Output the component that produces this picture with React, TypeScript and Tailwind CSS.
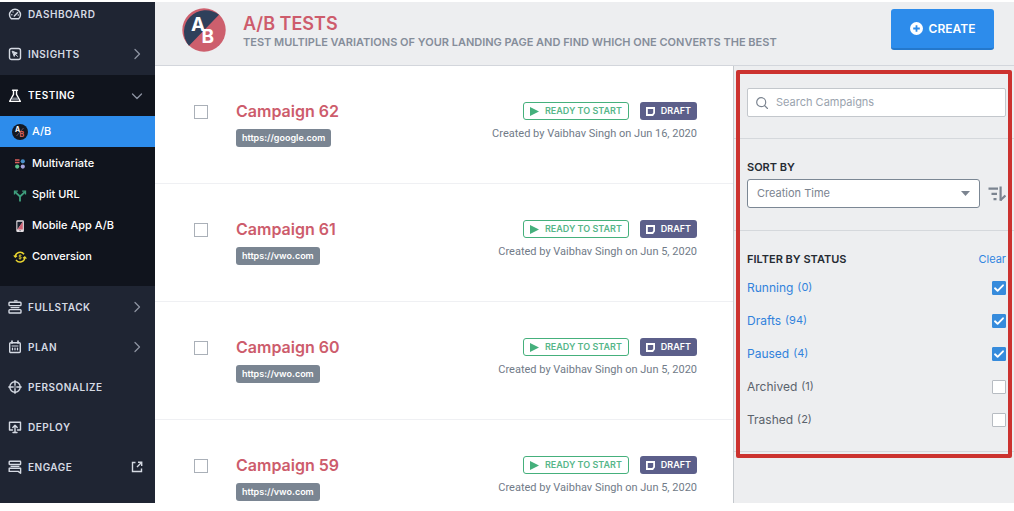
import React, { useState, type ReactNode } from 'react';

type NavigationItem = {
  label: string;
  icon: ReactNode;
  trailing?: 'chevron' | 'external';
};

type Campaign = {
  id: number;
  url: string;
  created: string;
};

const stroke = {
  fill: 'none',
  stroke: 'currentColor',
  strokeWidth: 1.6,
  strokeLinecap: 'round',
  strokeLinejoin: 'round',
} as const;

const topNavigation: NavigationItem[] = [
  { label: 'INSIGHTS', icon: <InsightsIcon />, trailing: 'chevron' },
];

const testingNavigation = [
  { label: 'Multivariate', icon: <MultivariateIcon /> },
  { label: 'Split URL', icon: <SplitIcon /> },
  { label: 'Mobile App A/B', icon: <MobileIcon /> },
  { label: 'Conversion', icon: <ConversionIcon /> },
];

const bottomNavigation: NavigationItem[] = [
  { label: 'FULLSTACK', icon: <FullstackIcon />, trailing: 'chevron' },
  { label: 'PLAN', icon: <PlanIcon />, trailing: 'chevron' },
  { label: 'PERSONALIZE', icon: <PersonalizeIcon /> },
  { label: 'DEPLOY', icon: <DeployIcon /> },
  { label: 'ENGAGE', icon: <EngageIcon />, trailing: 'external' },
];

const campaigns: Campaign[] = [
  { id: 62, url: 'https://google.com', created: 'Jun 16, 2020' },
  { id: 61, url: 'https://vwo.com', created: 'Jun 5, 2020' },
  { id: 60, url: 'https://vwo.com', created: 'Jun 5, 2020' },
  { id: 59, url: 'https://vwo.com', created: 'Jun 5, 2020' },
];

const statuses = [
  { name: 'Running', count: 0 },
  { name: 'Drafts', count: 94 },
  { name: 'Paused', count: 4 },
  { name: 'Archived', count: 1 },
  { name: 'Trashed', count: 2 },
];

export default function App() {
  return (
    <div className="flex h-screen overflow-hidden bg-white pt-0.5 pb-2 font-['Inter',sans-serif]">
      <Sidebar />
      <div className="flex min-w-0 flex-1 flex-col">
        <Header />
        <div className="flex min-h-0 flex-1">
          <main className="min-w-0 flex-1 overflow-hidden">
            {campaigns.map((campaign) => (
              <CampaignRow key={campaign.id} campaign={campaign} />
            ))}
          </main>
          <FilterPanel />
        </div>
      </div>
    </div>
  );
}

function Sidebar() {
  return (
    <nav
      aria-label="Main"
      className="w-[155px] shrink-0 overflow-hidden bg-[#1f2533] text-[#d5dae3]"
    >
      <a href="#dashboard" className="flex h-8 items-center gap-1.5 pb-2 pl-2">
        <DashboardIcon />
        <span className="text-[10px] font-semibold tracking-wider">DASHBOARD</span>
      </a>
      {topNavigation.map((item) => (
        <NavItem key={item.label} item={item} />
      ))}
      <div className="my-px bg-[#10141d] pb-3.5 text-white">
        <a href="#testing" className="flex h-[41px] items-center gap-1.5 pr-3 pl-2">
          <FlaskIcon />
          <span className="text-[10px] font-semibold tracking-wider">TESTING</span>
          <svg className="ml-auto h-3 w-3 text-[#8c93a1]" viewBox="0 0 12 12" {...stroke} strokeWidth={1.3}>
            <path d="M1.5 4 6 8.5 10.5 4" />
          </svg>
        </a>
        <a
          href="#ab"
          aria-current="page"
          className="mb-px flex h-[31px] items-center gap-1 bg-[#2d8ceb] pl-3 text-[11px] font-medium"
        >
          <AbSmallIcon />
          A/B
        </a>
        {testingNavigation.map((item) => (
          <a
            key={item.label}
            href="#tests"
            className="flex h-[31px] items-center gap-1 pl-3 text-[11px] font-medium"
          >
            {item.icon}
            {item.label}
          </a>
        ))}
      </div>
      {bottomNavigation.map((item) => (
        <NavItem key={item.label} item={item} />
      ))}
    </nav>
  );
}

function NavItem({ item }: { item: NavigationItem }) {
  return (
    <a href="#nav" className="flex h-10 items-center gap-1.5 pr-3 pl-2">
      {item.icon}
      <span className="text-[10px] font-semibold tracking-wider">{item.label}</span>
      {item.trailing === 'chevron' ? (
        <svg className="ml-auto h-3 w-3 text-[#8c93a1]" viewBox="0 0 12 12" {...stroke} strokeWidth={1.3}>
          <path d="M4 1.5 8.5 6 4 10.5" />
        </svg>
      ) : null}
      {item.trailing === 'external' ? (
        <svg className="ml-auto h-3 w-3" viewBox="0 0 12 12" {...stroke} strokeWidth={1.4} strokeLinecap="butt" strokeLinejoin="miter">
          <path d="M4.5 1.5h-3v9h9V7.5M7 1.3h3.7V5M10.5 1.5 6 6" />
        </svg>
      ) : null}
    </a>
  );
}

function Header() {
  return (
    <header className="flex h-16 shrink-0 items-center border-b border-[#d3d6dc] bg-[#edeef0] pr-5 pl-[27px]">
      <div className="flex flex-1 items-center gap-[17px] pb-2">
        <AbLogo />
        <div className="pt-1">
          <h1 className="text-lg leading-5 font-semibold text-[#cd5c6c]">A/B TESTS</h1>
          <p className="text-[11px] leading-4 font-semibold whitespace-nowrap text-[#858d9a]">
            TEST MULTIPLE VARIATIONS OF YOUR LANDING PAGE AND FIND WHICH ONE CONVERTS THE BEST
          </p>
        </div>
      </div>
      <button
        type="button"
        className="mb-2 flex h-[41px] w-[103px] items-center justify-center gap-1.5 rounded-[3px] border-b-2 border-[#2478cc] bg-[#2d8ceb] text-xs font-semibold text-white"
      >
        <svg className="h-[13px] w-[13px]" viewBox="0 0 13 13">
          <circle cx="6.5" cy="6.5" r="6.5" fill="#fff" />
          <path d="M6.5 3.2v6.6M3.2 6.5h6.6" stroke="#2d8ceb" strokeWidth="1.8" />
        </svg>
        CREATE
      </button>
    </header>
  );
}

function CampaignRow({ campaign }: { campaign: Campaign }) {
  return (
    <article className="flex h-[118px] items-start border-b border-[#eff0f3] pt-9 pr-9 pl-[39px]">
      <input
        type="checkbox"
        aria-label={`Select Campaign ${campaign.id}`}
        className="mt-[3px] h-3.5 w-3.5 shrink-0 appearance-none border border-[#aab0b8] bg-white checked:bg-[#2d8ceb]"
      />
      <div className="ml-7 flex flex-col items-start gap-2">
        <h2 className="text-base leading-[19px] font-semibold text-[#cd5c6c]">Campaign {campaign.id}</h2>
        <a
          href={campaign.url}
          className="flex h-[18px] items-center rounded-[3px] bg-[#7a8592] px-1.5 text-[9px] font-semibold text-white"
        >
          {campaign.url}
        </a>
      </div>
      <div className="ml-auto flex flex-col items-end gap-1.5">
        <div className="flex gap-[11px]">
          <span className="flex h-[18px] items-center gap-1.5 rounded-[3px] border border-[#45b07c] px-1.5 text-[9px] font-semibold text-[#56b689]">
            <svg className="h-[9px] w-[9px]" viewBox="0 0 9 9" fill="#45b07c">
              <path d="M0 0 9 4.5 0 9z" />
            </svg>
            READY TO START
          </span>
          <span className="flex h-[18px] items-center gap-1.5 rounded-[3px] bg-[#5c5f8a] px-1.5 text-[9px] font-semibold text-white">
            <svg className="h-[9px] w-[9px]" viewBox="0 0 9 9" fill="none" stroke="#fff" strokeWidth="1.8">
              <path d="M.9 1h7.2v5L6.6 8H.9z" />
            </svg>
            DRAFT
          </span>
        </div>
        <p className="font-['Roboto',sans-serif] text-[11px] leading-4 text-[#717b88]">
          Created by Vaibhav Singh on {campaign.created}
        </p>
      </div>
    </article>
  );
}

function FilterPanel() {
  const [selected, setSelected] = useState(['Running', 'Drafts', 'Paused']);

  const toggle = (name: string) =>
    setSelected((current) =>
      current.includes(name) ? current.filter((item) => item !== name) : [...current, name],
    );

  return (
    <aside className="relative w-[281px] shrink-0 border-l border-[#c5c9ce] bg-[#edeef0]">
      <div className="border-b border-[#d5d8dc] pt-[22px] pr-2 pb-[21px] pl-[13px]">
        <label className="flex h-[29px] items-center gap-2 rounded-[2px] border border-[#c3c7cc] bg-white px-2">
          <svg className="h-3 w-3 shrink-0 text-[#7b8490]" viewBox="0 0 12 12" {...stroke} strokeWidth={1.2}>
            <circle cx="5.2" cy="5.2" r="4.5" />
            <path d="m8.5 8.5 3 3" />
          </svg>
          <input
            type="search"
            aria-label="Search Campaigns"
            placeholder="Search Campaigns"
            className="min-w-0 flex-1 text-[11px] text-[#4c545e] outline-none placeholder:text-[#9aa3ae]"
          />
        </label>
      </div>

      <div className="border-b border-[#d5d8dc] pt-5 pr-2 pb-[22px] pl-[13px]">
        <label htmlFor="sort" className="block pb-1 text-[11px] leading-4 font-semibold text-[#252b33]">
          SORT BY
        </label>
        <div className="flex items-center gap-2">
          <div className="relative flex-1">
            <select
              id="sort"
              className="block h-[29px] w-full appearance-none rounded-[3px] border border-[#7b8794] bg-white px-[9px] text-[11px] text-[#7b8490] outline-none"
            >
              <option>Creation Time</option>
              <option>Name</option>
            </select>
            <svg
              className="pointer-events-none absolute top-3 right-2.5 h-[5px] w-[9px]"
              viewBox="0 0 9 5"
              fill="#7b8490"
            >
              <path d="M0 0h9L4.5 5z" />
            </svg>
          </div>
          <button type="button" aria-label="Sort direction">
            <svg className="h-4 w-[18px]" viewBox="0 0 18 16" fill="none" stroke="#7b8490" strokeWidth="2.2">
              <path d="M.5 2.6h9.5M3.5 7.9h5.5M5.5 13.1h3M12.6.5v14.2" />
              <path d="m12.4 14.3 5-4.8" strokeWidth="2.2" />
            </svg>
          </button>
        </div>
      </div>

      <fieldset className="border-b border-[#d5d8dc] pt-5 pr-2 pb-[15px] pl-[13px]">
        <div className="flex items-center justify-between pb-1 text-[11px] leading-4">
          <span className="font-semibold text-[#252b33]">FILTER BY STATUS</span>
          <button type="button" className="text-[#3185e0]" onClick={() => setSelected([])}>
            Clear
          </button>
        </div>
        {statuses.map(({ name, count }) => {
          const checked = selected.includes(name);
          return (
            <label
              key={name}
              className={`flex h-[33px] items-center text-xs ${
                checked ? 'text-[#3182dc]' : 'text-[#5a626c]'
              }`}
            >
              {name}
              <span className="ml-1 text-[11px]">({count})</span>
              <span className="ml-auto grid">
                <input
                  type="checkbox"
                  checked={checked}
                  onChange={() => toggle(name)}
                  className="col-start-1 row-start-1 h-3.5 w-3.5 appearance-none rounded-[1px] border border-[#b7bcc2] bg-white checked:border-[#368bdc] checked:bg-[#368bdc]"
                />
                {checked ? (
                  <svg
                    className="pointer-events-none col-start-1 row-start-1 h-3.5 w-3.5 text-white"
                    viewBox="0 0 14 14"
                    {...stroke}
                    strokeWidth={1.9}
                  >
                    <path d="m3 7.3 2.6 2.5L11 4.3" />
                  </svg>
                ) : null}
              </span>
            </label>
          );
        })}
      </fieldset>

      {/* highlight frame around the filters */}
      <div className="pointer-events-none absolute top-1 right-0.5 left-0.5 h-[388px] rounded-[2px] border-4 border-[#cc322f]" />
    </aside>
  );
}

function AbLogo() {
  return (
    <svg className="h-11 w-11 shrink-0" viewBox="0 0 44 44">
      <circle cx="22" cy="22" r="21.7" fill="#cd5f6d" />
      <path d="M7 37.7A21.7 21.7 0 0 1 37 6.7z" fill="#2f405b" />
      <g fill="#fff" fontFamily="Inter, sans-serif" fontWeight="700" fontSize="19">
        <text x="9" y="22.5">A</text>
        <text x="19.5" y="35">B</text>
      </g>
    </svg>
  );
}

function AbSmallIcon() {
  return (
    <svg className="h-4 w-4 shrink-0" viewBox="0 0 16 16">
      <circle cx="8" cy="8" r="8" fill="#141923" />
      <path d="m4.5 12 7-8" stroke="#8b6b76" strokeWidth=".7" />
      <g fontFamily="Inter, sans-serif" fontWeight="700" fontSize="7">
        <text x="3" y="8" fill="#fff">A</text>
        <text x="7.5" y="13" fill="#e0655c">B</text>
      </g>
    </svg>
  );
}

function MultivariateIcon() {
  return (
    <svg className="h-4 w-4 shrink-0" viewBox="0 0 16 16">
      <path d="M3 4h4.5M3 6.6h4.5" stroke="#d95f5b" strokeWidth="1.5" />
      <circle cx="10.8" cy="5.3" r="2.1" fill="#4a90c8" />
      <circle cx="5.2" cy="10.6" r="2.1" fill="#5cc08c" />
      <circle cx="10.8" cy="10.6" r="2.1" fill="#a9a5dc" />
    </svg>
  );
}

function SplitIcon() {
  return (
    <svg className="h-4 w-4 shrink-0" viewBox="0 0 16 16" fill="none" stroke="#3f9f7d" strokeWidth="1.8">
      <path d="M8 14.5V9.5L3 4.8M8 9.5 13 4.8" />
      <path d="M2.5 7.5V4.2h3.3M13.5 7.5V4.2h-3.3" strokeWidth="1.3" />
    </svg>
  );
}

function MobileIcon() {
  return (
    <svg className="h-4 w-4 shrink-0" viewBox="0 0 16 16">
      <rect x="4.3" y="2.2" width="7.6" height="11.8" rx="1.2" fill="#e4dfe3" />
      <path d="M5.4 3.8h5.4L5.4 11.5z" fill="#1a1f2c" />
      <path d="M10.8 3.8v7.7H5.4z" fill="#cf6374" />
      <path d="M7.3 12.7h1.6" stroke="#555b66" strokeWidth=".8" />
    </svg>
  );
}

function ConversionIcon() {
  return (
    <svg className="h-4 w-4 shrink-0" viewBox="0 0 16 16" fill="none" stroke="#e8d430" strokeWidth="1.5">
      <path d="M3.3 8A4.8 4.8 0 0 1 12 5.3M12.8 8A4.8 4.8 0 0 1 4 10.8" />
      <path d="M1.8 6.4 3.3 8.2l1.8-1.4M14.4 9.6 12.8 7.8l-1.8 1.4" strokeWidth="1.2" />
      <path d="M9.5 6.6c-1-.8-2.8-.4-2.5.6.2.9 2.3.5 2.4 1.5.1 1-1.7 1.3-2.7.5M8 5.4v5.2" strokeWidth=".8" />
    </svg>
  );
}

function DashboardIcon() {
  return (
    <svg className="h-3.5 w-3.5 shrink-0" viewBox="0 0 14 14" {...stroke} strokeWidth={1.4}>
      <path d="M3.3 11.8A5.5 5.5 0 1 1 10.7 11.8z" />
      <path d="m6.3 9 3.4-3.6M3.8 7.8h.1M5 4.9h.1M10.2 8h.1" />
    </svg>
  );
}

function InsightsIcon() {
  return (
    <svg className="h-3.5 w-3.5 shrink-0" viewBox="0 0 14 14" {...stroke} strokeWidth={1.4}>
      <rect x="1.5" y="1.5" width="11" height="11" rx="2" />
      <path d="m4.5 4.3 4.8 1.8-2 .9-.9 2.1zM7.5 7.2l2 2.2" fill="currentColor" strokeWidth={1} />
    </svg>
  );
}

function FlaskIcon() {
  return (
    <svg className="h-3.5 w-3.5 shrink-0" viewBox="0 0 14 14" {...stroke} strokeWidth={1.4}>
      <path d="M4.5 1.2h5M5.5 1.4v4L1.7 12.4h10.6L8.5 5.4v-4" />
      <path d="M4.5 8.6h5l1.4 2.6H3.1z" fill="#777d87" stroke="none" />
    </svg>
  );
}

function FullstackIcon() {
  return (
    <svg className="h-3.5 w-3.5 shrink-0" viewBox="0 0 14 14" {...stroke} strokeWidth={1.4}>
      <rect x="1" y="2.2" width="12" height="3.4" rx=".8" />
      <rect x="1" y="9.6" width="12" height="3.4" rx=".8" />
      <path d="M3 7.6h8" strokeWidth={1.2} />
      <path d="M6.5.9h2.5" />
    </svg>
  );
}

function PlanIcon() {
  return (
    <svg className="h-3.5 w-3.5 shrink-0" viewBox="0 0 14 14" {...stroke} strokeWidth={1.4}>
      <rect x="1.7" y="2.7" width="10.6" height="9.8" rx="1" />
      <path d="M4 1v2M10 1v2" strokeWidth={1.7} />
      <path d="M4 6h6" strokeWidth={1} />
      <path d="M4.5 8.2v1.6M7 8.2v1.6M9.5 8.2v1.6" strokeWidth={1.3} />
    </svg>
  );
}

function PersonalizeIcon() {
  return (
    <svg className="h-3.5 w-3.5 shrink-0" viewBox="0 0 14 14" {...stroke} strokeWidth={1.4}>
      <circle cx="7" cy="7" r="5.2" />
      <path d="M7 .8v4.4M7 8.8v4.4M.8 7h4.4M8.8 7h4.4" />
      <circle cx="7" cy="7" r=".8" fill="currentColor" stroke="none" />
    </svg>
  );
}

function DeployIcon() {
  return (
    <svg className="h-3.5 w-3.5 shrink-0" viewBox="0 0 14 14" {...stroke} strokeWidth={1.4}>
      <path d="M4.5 10H1.5V2.2h11V10h-3" />
      <path d="M7 12V5.5M4.8 7.5 7 5.2l2.2 2.3M5 12.5h4" />
    </svg>
  );
}

function EngageIcon() {
  return (
    <svg className="h-3.5 w-3.5 shrink-0" viewBox="0 0 14 14" {...stroke} strokeWidth={1.4}>
      <rect x="1.2" y="1.3" width="11.4" height="3.2" rx=".6" />
      <path d="M3 6.3h8" strokeWidth={1.2} />
      <path d="M1.2 8.2h11.4v5l-2.4-1.8h-9z" />
    </svg>
  );
}
